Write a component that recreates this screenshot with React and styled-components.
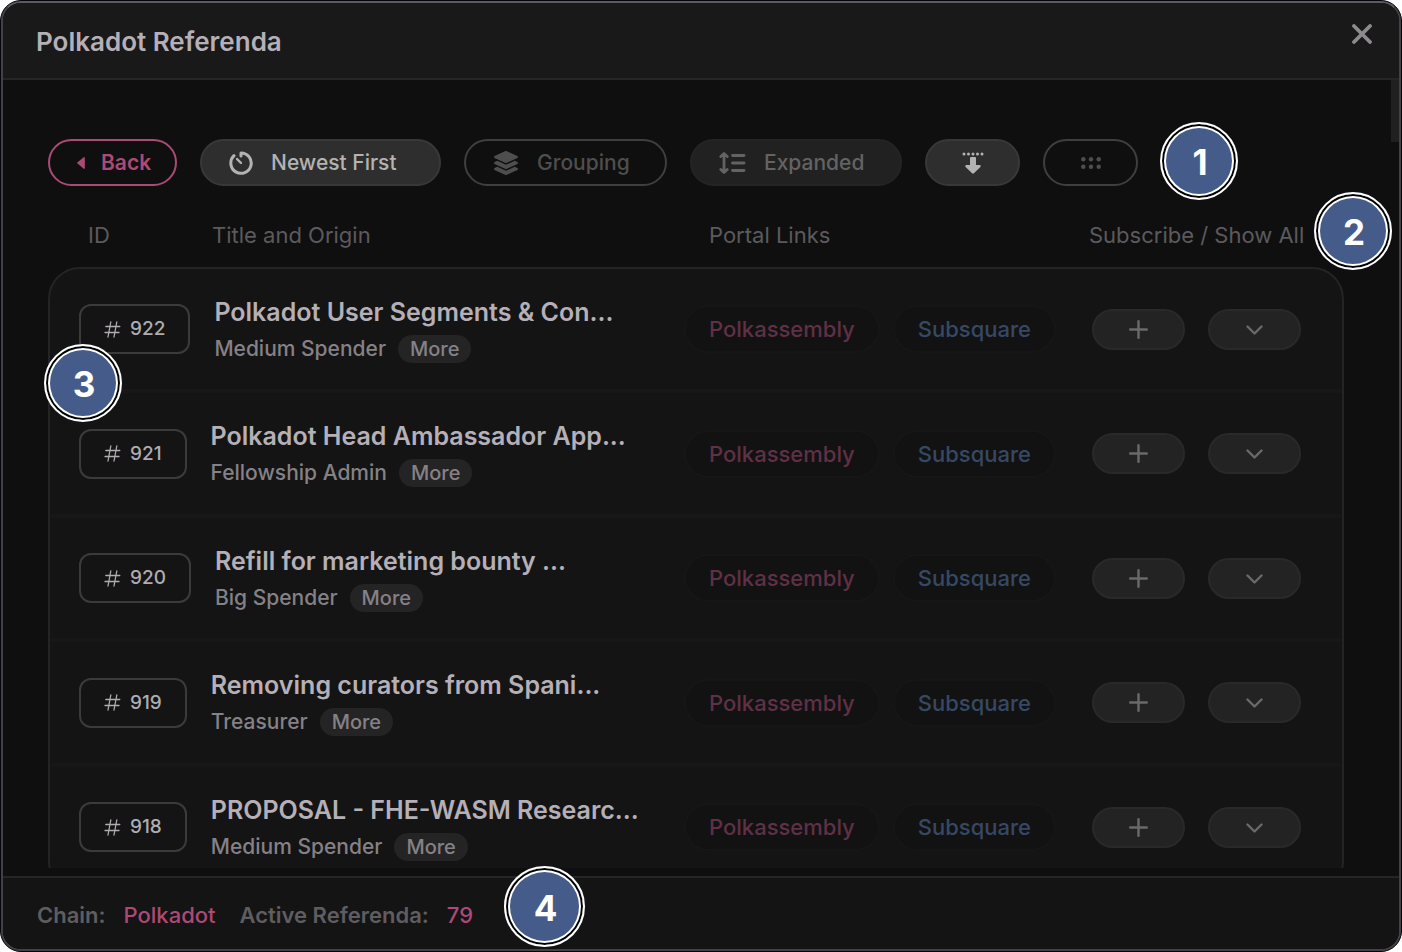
import React from "react";
import styled, { createGlobalStyle, css } from "styled-components";

const Global = createGlobalStyle`
  * { box-sizing: border-box; }
  body { margin: 0; background: #fff; font-family: Inter, "Liberation Sans", sans-serif; }
  button { font-family: inherit; cursor: pointer; }
  svg { flex: none; }
`;

const Frame = styled.div`
  position: relative;
  height: 100vh;
  border: 1px solid #08040f;
  border-radius: 21px;
  background: #08040f;
`;

const Window = styled.main`
  height: 100%;
  display: flex;
  flex-direction: column;
  overflow: hidden;
  background: #0f0f0f;
  border: 2px solid #424242;
  border-top-color: #5c5b5d;
  border-radius: 20px;
`;

const TitleBar = styled.header`
  flex: none;
  display: flex;
  align-items: center;
  justify-content: space-between;
  height: 77px;
  padding: 0 27px 0 33px;
  background: #191919;
  border-bottom: 2px solid #262626;
`;

const Heading = styled.h1`
  margin: 2px 0 0;
  font-size: 26px;
  line-height: 32px;
  font-weight: 600;
  color: #b5b0b8;
`;

const CloseButton = styled.button`
  display: flex;
  margin-bottom: 14px;
  padding: 0;
  border: 0;
  background: none;
  color: #8e8a90;
`;

const Body = styled.section`
  position: relative;
  flex: 1;
  min-height: 0;
  margin-bottom: 8px;
  display: flex;
`;

const Scroller = styled.div`
  flex: 1;
  min-width: 0;
  overflow-y: auto;
  scrollbar-width: none;
  padding: 59px 55px 0 45px;
`;

const Thumb = styled.div`
  position: absolute;
  top: 0;
  right: 0;
  width: 8px;
  height: 62px;
  background: #202020;
`;

const Toolbar = styled.div`
  display: flex;
  gap: 23px;
`;

const tones = {
  accent: css`gap: 16px; background: none; border-color: #ab4a76; color: #ab4a76; font-weight: 600;`,
  solid: css`background: #2e2e2e; border-color: #383838; color: #b3b3b3;`,
  outline: css`background: none; border-color: #3f3f3f; color: #4e4e4e;`,
  dim: css`background: #212121; border-color: #242424; color: #636363;`,
};

const ToolButton = styled.button`
  display: flex;
  align-items: center;
  justify-content: ${(p) => (p.$icon ? "center" : "flex-start")};
  gap: 18px;
  width: ${(p) => p.$width}px;
  height: 47px;
  padding: 0 0 0 ${(p) => (p.$icon ? 0 : 27)}px;
  border: 2px solid;
  border-radius: 24px;
  font-size: 21px;
  line-height: 28px;
  font-weight: 500;
  white-space: nowrap;
  ${(p) => tones[p.$tone]}
`;

const Table = styled.table`
  display: block;
  width: 100%;
`;

const columns = css`
  display: grid;
  align-items: center;
`;

const Head = styled.thead`
  display: block;
`;

const HeadRow = styled.tr`
  ${columns}
  grid-template-columns: 124px 1fr 380px 215px;
  height: 81px;
  padding: 16px 40px 0 40px;
`;

const HeadCell = styled.th`
  padding: 0;
  text-align: left;
  white-space: nowrap;
  font-size: 22px;
  line-height: 28px;
  font-weight: 400;
  color: #5c5a5d;
`;

const Rows = styled.tbody`
  display: block;
  background: #141414;
  border: 2px solid #242424;
  border-radius: 32px;
  overflow: hidden;
`;

const Row = styled.tr`
  ${columns}
  grid-template-columns: auto 1fr auto auto;
  height: 124px;
  padding: 0 41px 0 29px;
  border-bottom: 4px solid #171717;
  &:nth-child(even) { height: 125px; }
`;

const Cell = styled.td`
  display: flex;
  align-items: center;
  padding: 0;
`;

const IdTag = styled.span`
  display: flex;
  align-items: center;
  gap: 9px;
  height: 50px;
  margin-right: 24px;
  padding: 0 23px;
  border: 2px solid #3b3b3b;
  border-radius: 12px;
  font-size: 19px;
  line-height: 24px;
  font-weight: 500;
  color: #b0acb2;
`;

const Proposal = styled.div`
  display: flex;
  flex-direction: column;
  gap: 7px;
`;

const Title = styled.h2`
  margin: 0;
  font-size: 25px;
  line-height: 32px;
  font-weight: 600;
  white-space: nowrap;
  color: #b5b0b8;
`;

const Origin = styled.div`
  display: flex;
  align-items: center;
  gap: 12px;
  font-size: 21px;
  line-height: 28px;
  font-weight: 500;
  color: #858187;
`;

const MoreButton = styled.button`
  height: 28px;
  padding: 0 12px;
  border: 0;
  border-radius: 14px;
  background: #242424;
  color: #858187;
  font-size: 20px;
  line-height: 28px;
  font-weight: 500;
`;

const Portals = styled(Cell)`
  gap: 13px;
  margin-right: 36px;
`;

const PortalLink = styled.a`
  padding: 8px 23px;
  border: 2px solid #161616;
  border-radius: 24px;
  background: #121212;
  font-size: 22px;
  line-height: 28px;
  font-weight: 500;
  text-decoration: none;
  color: ${(p) => p.$color};
`;

const Actions = styled(Cell)`
  gap: 23px;
`;

const ActionButton = styled.button`
  display: flex;
  align-items: center;
  justify-content: center;
  width: 93px;
  height: 41px;
  padding: 0;
  border: 2px solid #292929;
  border-radius: 21px;
  background: #232323;
  color: #6a6a6a;
`;

const Footer = styled.footer`
  flex: none;
  display: flex;
  align-items: center;
  gap: 24px;
  height: 73px;
  padding: 3px 34px 0;
  border-top: 2px solid #262626;
  background: #141414;
  font-size: 22px;
  line-height: 28px;
  font-weight: 600;
  color: #5f5d61;
`;

const Stat = styled.span`
  display: flex;
  gap: 18px;
`;

const StatValue = styled.strong`
  font-weight: 500;
  color: #ab4a76;
`;

const Marker = styled.span`
  position: absolute;
  left: ${(p) => p.$x};
  top: ${(p) => p.$y};
  display: flex;
  align-items: center;
  justify-content: center;
  width: ${(p) => p.$size || 78}px;
  height: ${(p) => p.$size || 78}px;
  padding: 2px 0 0 2px;
  border: 2px solid #fff;
  border-radius: 50%;
  background: #455c8b;
  box-shadow: inset 0 0 0 2px #000, inset 0 0 0 4px #fff;
  font-size: 35px;
  line-height: 40px;
  font-weight: 700;
  color: #fff;
`;

const CloseIcon = () => (
  <svg width="20" height="20" viewBox="0 0 20 20" fill="none" stroke="currentColor" strokeWidth="3.800" strokeLinecap="round" aria-hidden="true">
    <path d="M2 2l16 16M18 2L2 18" />
  </svg>
);
const CaretIcon = () => (
  <svg width="8" height="14" viewBox="0 0 9 14" fill="currentColor" aria-hidden="true">
    <path d="M7.6.4L.6 6.1a1 1 0 0 0 0 1.600l7 5.900c.6.5 1.200.2 1.200-.6V1C8.800.2 8.200-.1 7.600.4z" />
  </svg>
);
const TimerIcon = () => (
  <svg width="24" height="24" viewBox="0 0 24 24" fill="none" stroke="currentColor" strokeWidth="3" strokeLinecap="round" strokeLinejoin="round" aria-hidden="true">
    <path d="M12 5V1.900A10.200 10.200 0 1 1 5 4.700" />
    <path d="M8 8l4 4" strokeWidth="2.400" />
  </svg>
);
const LayersIcon = () => (
  <svg width="26" height="24" viewBox="0 0 512 512" fill="currentColor" aria-hidden="true">
    <path d="M12.410 148.020l232.940 105.670c6.800 3.090 14.490 3.090 21.290 0l232.940-105.670c16.550-7.510 16.550-32.520 0-40.030L266.650 2.310a25.607 25.607 0 0 0-21.290 0L12.410 107.980c-16.550 7.510-16.550 32.530 0 40.040zm487.180 88.280l-58.090-26.330-161.640 73.270c-7.560 3.430-15.590 5.170-23.860 5.170s-16.290-1.740-23.860-5.170L70.510 209.970l-58.100 26.330c-16.550 7.500-16.550 32.500 0 40l232.940 105.590c6.800 3.080 14.490 3.080 21.290 0L499.590 276.300c16.550-7.500 16.550-32.500 0-40zm0 127.800l-57.870-26.230-161.860 73.370c-7.560 3.430-15.590 5.170-23.860 5.170s-16.290-1.740-23.860-5.170L70.290 337.870 12.410 364.100c-16.550 7.500-16.550 32.500 0 40l232.940 105.590c6.800 3.080 14.490 3.080 21.290 0L499.590 404.100c16.550-7.500 16.550-32.500 0-40z" />
  </svg>
);
const LinesIcon = () => (
  <svg width="27" height="22" viewBox="0 0 27 22" fill="none" stroke="currentColor" strokeWidth="2.800" strokeLinecap="round" strokeLinejoin="round" aria-hidden="true">
    <path d="M13.500 3.500h11.500M13.500 11h11.500M13.500 18.500h11.500" />
    <path d="M5 3v16M1.800 4.500L5 1.500l3.200 3M1.800 17.500l3.200 3 3.200-3" />
  </svg>
);
const DropIcon = () => (
  <svg width="22" height="22" viewBox="0 0 22 22" fill="currentColor" aria-hidden="true">
    {[2, 6.500, 11, 15.500, 20].map((x) => <circle key={x} cx={x} cy="2" r="1.500" />)}
    <path d="M8 6.200c0-.7.500-1.200 1.200-1.200h3.600c.7 0 1.200.5 1.200 1.200V13h3.500c1.200 0 1.700 1.200.9 2l-6.500 6.300c-.5.500-1.300.5-1.800 0L3.600 15c-.8-.8-.3-2 .9-2H8z" />
  </svg>
);
const DotsIcon = () => (
  <svg width="20" height="12" viewBox="0 0 20 12" fill="currentColor" aria-hidden="true">
    {[2.300, 10, 17.700].map((x) => [2.300, 9.700].map((y) => <circle key={`${x}-${y}`} cx={x} cy={y} r="2.200" />))}
  </svg>
);
const HashIcon = () => (
  <svg width="17" height="17" viewBox="0 0 17 17" fill="none" stroke="currentColor" strokeWidth="1.300" strokeLinecap="round" aria-hidden="true">
    <path d="M1.800 5.500h14M1 11.500h14M6.800 1L4 16M12.800 1L10 16" />
  </svg>
);
const PlusIcon = () => (
  <svg width="19" height="19" viewBox="0 0 19 19" fill="none" stroke="currentColor" strokeWidth="2.400" strokeLinecap="round" aria-hidden="true">
    <path d="M9.500 1.200v16.600M1.200 9.500h16.600" />
  </svg>
);
const ChevronIcon = () => (
  <svg width="17" height="11" viewBox="0 0 17 11" fill="none" stroke="currentColor" strokeWidth="2.400" strokeLinecap="round" strokeLinejoin="round" aria-hidden="true">
    <path d="M1.500 2.500l7 7 7-7" />
  </svg>
);

const referenda = [
  { id: 922, title: "Polkadot User Segments & Con...", origin: "Medium Spender" },
  { id: 921, title: "Polkadot Head Ambassador App...", origin: "Fellowship Admin" },
  { id: 920, title: "Refill for marketing bounty ...", origin: "Big Spender" },
  { id: 919, title: "Removing curators from Spani...", origin: "Treasurer" },
  { id: 918, title: "PROPOSAL - FHE-WASM Researc...", origin: "Medium Spender" },
];

const Referendum = ({ id, title, origin }) => (
  <Row>
    <Cell><IdTag><HashIcon />{id}</IdTag></Cell>
    <Cell>
      <Proposal>
        <Title>{title}</Title>
        <Origin>{origin}<MoreButton type="button">More</MoreButton></Origin>
      </Proposal>
    </Cell>
    <Portals>
      <PortalLink href="#polkassembly" $color="#5f3046">Polkassembly</PortalLink>
      <PortalLink href="#subsquare" $color="#364964">Subsquare</PortalLink>
    </Portals>
    <Actions>
      <ActionButton type="button" aria-label={`Subscribe to ${id}`}><PlusIcon /></ActionButton>
      <ActionButton type="button" aria-label={`Show all for ${id}`}><ChevronIcon /></ActionButton>
    </Actions>
  </Row>
);

export default function App() {
  return (
    <>
      <Global />
      <Frame>
        <Window>
          <TitleBar>
            <Heading>Polkadot Referenda</Heading>
            <CloseButton type="button" aria-label="Close"><CloseIcon /></CloseButton>
          </TitleBar>
          <Body>
            <Scroller>
              <Toolbar>
                <ToolButton type="button" $tone="accent" $width={129}><CaretIcon />Back</ToolButton>
                <ToolButton type="button" $tone="solid" $width={241}><TimerIcon />Newest First</ToolButton>
                <ToolButton type="button" $tone="outline" $width={203}><LayersIcon />Grouping</ToolButton>
                <ToolButton type="button" $tone="dim" $width={212}><LinesIcon />Expanded</ToolButton>
                <ToolButton type="button" $tone="solid" $width={95} $icon aria-label="Load more"><DropIcon /></ToolButton>
                <ToolButton type="button" $tone="outline" $width={95} $icon aria-label="Pages"><DotsIcon /></ToolButton>
              </Toolbar>
              <Table>
                <Head>
                  <HeadRow>
                    <HeadCell>ID</HeadCell>
                    <HeadCell>Title and Origin</HeadCell>
                    <HeadCell>Portal Links</HeadCell>
                    <HeadCell>Subscribe / Show All</HeadCell>
                  </HeadRow>
                </Head>
                <Rows>
                  {referenda.map((r) => <Referendum key={r.id} {...r} />)}
                </Rows>
              </Table>
            </Scroller>
            <Thumb />
          </Body>
          <Footer>
            <Stat>Chain: <StatValue>Polkadot</StatValue></Stat>
            <Stat>Active Referenda: <StatValue>79</StatValue></Stat>
          </Footer>
        </Window>
        <Marker $x="1159px" $y="121px">1</Marker>
        <Marker $x="calc(100% - 87px)" $y="191px">2</Marker>
        <Marker $x="43px" $y="343px">3</Marker>
        <Marker $x="503px" $y="calc(100% - 85px)" $size={81}>4</Marker>
      </Frame>
    </>
  );
}
